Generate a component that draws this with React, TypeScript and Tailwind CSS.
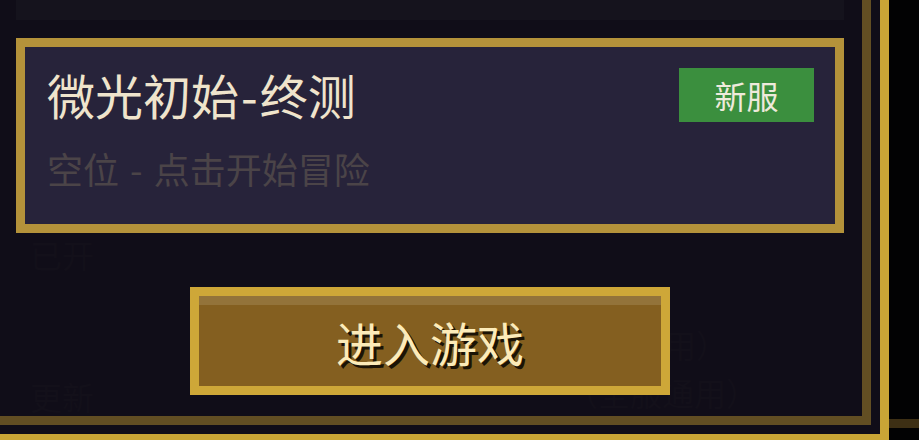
import React from "react";

export default function App() {
  return (
    <div
      className="relative w-[919px] h-[440px] overflow-hidden bg-[#020203]"
      style={{ fontFamily: '"Noto Sans CJK SC", "Noto Sans", sans-serif' }}
    >
      <div className="-ml-[9px] -mt-[9px] w-[898px] h-[452px] border-[9px] border-[#c9a536] bg-[#100d18] pr-[9px] pb-[9px]">
        <div className="relative h-full border-r-[9px] border-b-[9px] border-[#624e23] pl-[16px] pr-[18px] flex flex-col">
          {/* faint text showing through the dim backdrop */}
          <span className="absolute left-[30px] top-[376px] text-[32px] leading-[40px] text-[#13101a]">更新</span>
          <span className="absolute left-[30px] top-[234px] text-[32px] leading-[40px] text-[#13101a]">已开</span>
          <span className="absolute left-[664px] top-[324px] text-[32px] leading-[40px] text-[#13101a]">用）</span>
          <span className="absolute left-[566px] top-[372px] text-[32px] leading-[40px] text-[#13101a]">（全服通用）</span>

          <div className="relative h-[20px] bg-[#15131d]" />

          <div className="relative mt-[18px] h-[195px] border-[9px] border-[#b4923a] bg-[#27233a] pl-[22px] pr-[21px] pt-[21px]">
            <div className="flex items-center justify-between h-[54px]">
              <span className="-mt-[3px] text-[48px] leading-[48px] text-[#efe4cc] whitespace-nowrap">
                微光初始<span className="mx-[2px]">-</span>终测
              </span>
              <span className="w-[135px] h-[54px] bg-[#3b8f3e] flex items-center justify-center text-[32px] leading-[32px] text-[#eeeadb]">
                新服
              </span>
            </div>
            <div className="mt-[28px] text-[36px] leading-[36px] text-[#4b4448] whitespace-nowrap">
              空位 <span className="mx-[3px]">-</span> 点击开始冒险
            </div>
          </div>

          <button className="relative mt-[54px] self-center w-[480px] h-[108px] border-[9px] border-[#cea738] bg-[#845f20] shadow-[inset_0_9px_0_#93733a] flex items-center justify-center">
            <span
              className="text-[47px] leading-[47px] font-normal text-[#fcebb9]"
              style={{ textShadow: "3px 3px 0 #1b1306" }}
            >
              进入游戏
            </span>
          </button>
        </div>
      </div>
      <div className="absolute left-[889px] top-[419px] w-[30px] h-[9px] bg-[#3d2f14]" />
    </div>
  );
}
